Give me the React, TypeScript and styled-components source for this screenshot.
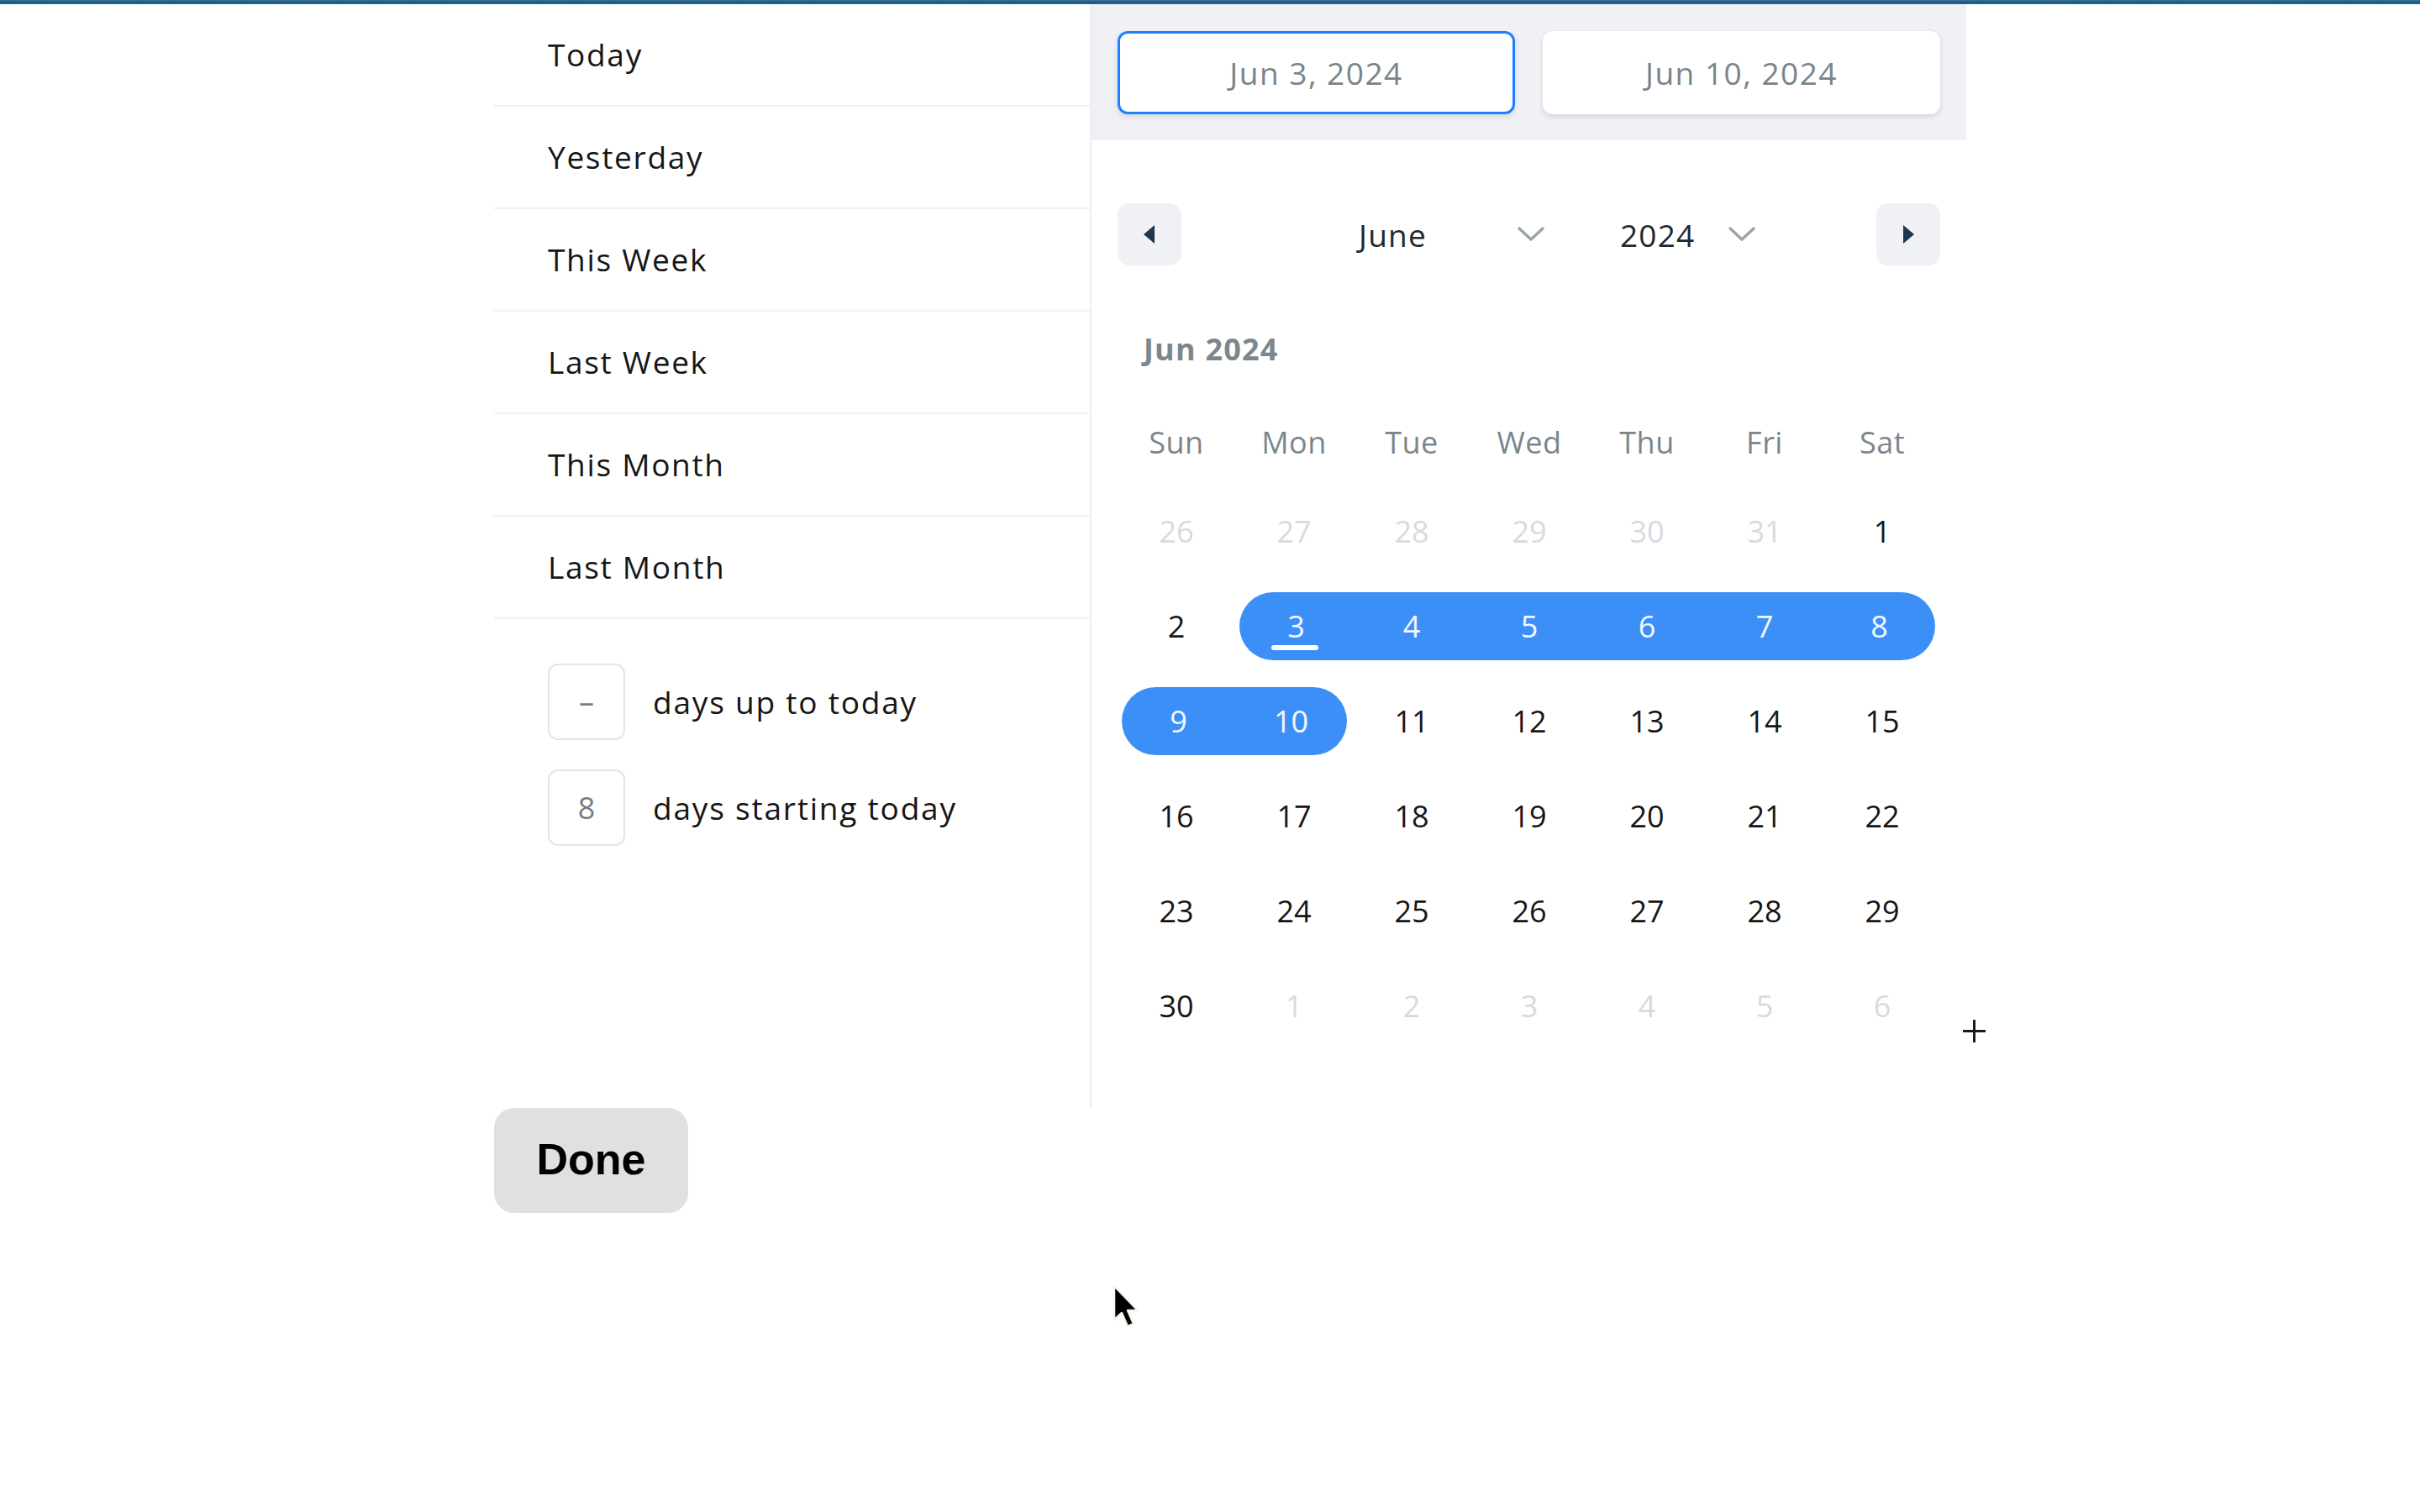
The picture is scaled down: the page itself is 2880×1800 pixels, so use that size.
import React from "react";
import styled, { createGlobalStyle, css } from "styled-components";

const GlobalStyle = createGlobalStyle`
  html, body { margin: 0; padding: 0; background: #ffffff; }
  body { font-family: "Open Sans", "Noto Sans", sans-serif; color: #151515; }
  * { box-sizing: border-box; }
`;

const Page = styled.div`
  position: relative;
  width: 2880px;
  min-height: 1800px;
  background: #fff;
`;

const TopBar = styled.div`
  height: 5px;
  background: linear-gradient(to bottom, #3b7ea3 0%, #1c5478 50%, #2c6b90 100%);
`;

const Main = styled.div`
  display: flex;
  padding-left: 588px;
`;

const LeftPanel = styled.div`
  width: 709px;
  display: flex;
  flex-direction: column;
`;

const PresetRow = styled.div`
  height: 122px;
  border-bottom: 2px solid #eef0f3;
  display: flex;
  align-items: center;
  padding-left: 64px;
  padding-bottom: 2px;
  font-size: 37px;
  letter-spacing: 1.7px;
  color: #161616;
`;

const CountList = styled.div`
  display: flex;
  flex-direction: column;
  gap: 35px;
  padding: 53px 0 0 64px;
`;

const CountRow = styled.div`
  display: flex;
  align-items: center;
  gap: 33px;
`;

const CountBox = styled.div`
  width: 92px;
  height: 91px;
  border: 2px solid #dfe6e9;
  border-radius: 12px;
  display: flex;
  align-items: center;
  justify-content: center;
  font-size: 36px;
  color: #747e83;
`;

const CountLabel = styled.span`
  font-size: 37px;
  letter-spacing: 1.8px;
  color: #151515;
`;

const RightPanel = styled.div`
  width: 1043px;
  height: 1314px;
  border-left: 2px solid #eceef2;
  display: flex;
  flex-direction: column;
`;

const RangeHeader = styled.div`
  background: #eff1f5;
  padding: 32px 31px 31px 31px;
  display: flex;
  gap: 33px;
`;

const DateInput = styled.div<{ $active?: boolean }>`
  width: 474px;
  height: 99px;
  background: #fff;
  border-radius: 12px;
  display: flex;
  align-items: center;
  justify-content: center;
  font-size: 37px;
  letter-spacing: 1.5px;
  color: #79848a;
  box-shadow: 0 3px 6px rgba(40, 50, 70, 0.14);
  border: 3px solid ${(p) => (p.$active ? "#1f80ff" : "#ffffff")};
`;

const CalendarBody = styled.div`
  padding: 75px 31px 0 31px;
  display: flex;
  flex-direction: column;
`;

const NavRow = styled.div`
  display: flex;
  align-items: center;
  height: 74px;
`;

const NavButton = styled.div`
  width: 76px;
  height: 74px;
  border-radius: 14px;
  background: #f0f1f5;
  display: flex;
  align-items: center;
  justify-content: center;
`;

const Selects = styled.div`
  flex: 1;
  display: flex;
  align-items: center;
  padding-left: 211px;
`;

const SelectBox = styled.div<{ $w: number }>`
  width: ${(p) => p.$w}px;
  display: flex;
  align-items: center;
  justify-content: space-between;
  font-size: 37px;
  letter-spacing: 1.2px;
  color: #22292f;
`;

const MonthHeading = styled.div`
  margin-top: 73px;
  padding-left: 31px;
  height: 54px;
  line-height: 54px;
  font-size: 36px;
  font-weight: 700;
  letter-spacing: 1.2px;
  color: #7c878d;
`;

const Grid = styled.div`
  margin-top: 33px;
  display: grid;
  grid-template-columns: repeat(7, 140px);
`;

const WeekDay = styled.div`
  height: 100px;
  display: flex;
  align-items: center;
  justify-content: center;
  font-size: 36px;
  letter-spacing: 0.5px;
  color: #7a868c;
`;

const DayCell = styled.div`
  height: 113px;
  display: flex;
  align-items: center;
`;

const Band = styled.div<{ $inRange: boolean; $start: boolean; $end: boolean; $muted: boolean }>`
  position: relative;
  flex: 1;
  height: 81px;
  display: flex;
  align-items: center;
  justify-content: center;
  font-size: 36px;
  color: ${(p) => (p.$muted ? "#d6dbe0" : "#161616")};
  ${(p) =>
    p.$inRange &&
    css`
      background: #3d8ff8;
      color: #f4f8ff;
    `}
  ${(p) =>
    p.$start &&
    css`
      margin-left: 5px;
      border-top-left-radius: 41px;
      border-bottom-left-radius: 41px;
    `}
  ${(p) =>
    p.$end &&
    css`
      margin-right: 7px;
      border-top-right-radius: 41px;
      border-bottom-right-radius: 41px;
    `}
`;

const TodayMark = styled.span`
  position: absolute;
  left: 50%;
  bottom: 12px;
  width: 56px;
  height: 6px;
  margin-left: -30px;
  border-radius: 3px;
  background: #ffffff;
`;

const Footer = styled.div`
  padding-left: 588px;
`;

const DoneButton = styled.button`
  width: 231px;
  height: 125px;
  border: none;
  border-radius: 24px;
  background: #e0e0e0;
  font-family: "Liberation Sans", Arial, sans-serif;
  font-weight: 700;
  font-size: 52px;
  color: #000;
  padding: 0 0 4px 0;
`;

const Crosshair = styled.div`
  position: absolute;
  left: 2336px;
  top: 1214px;
  width: 27px;
  height: 27px;
  &::before,
  &::after {
    content: "";
    position: absolute;
    background: #1a1a1a;
  }
  &::before {
    left: 12px;
    top: 0;
    width: 3px;
    height: 27px;
  }
  &::after {
    top: 12px;
    left: 0;
    height: 3px;
    width: 27px;
  }
`;

const Pointer = styled.svg`
  position: absolute;
  left: 1322px;
  top: 1528px;
`;

const ChevronDown = () => (
  <svg width="34" height="20" viewBox="0 0 34 20">
    <path d="M3 3 L17 16 L31 3" fill="none" stroke="#9ba4a9" strokeWidth="3.5" strokeLinecap="round" strokeLinejoin="round" />
  </svg>
);

const presets = ["Today", "Yesterday", "This Week", "Last Week", "This Month", "Last Month"];
const weekdays = ["Sun", "Mon", "Tue", "Wed", "Thu", "Fri", "Sat"];

type Day = { n: number; muted?: boolean; inRange?: boolean; start?: boolean; end?: boolean; today?: boolean };

const buildDays = (): Day[] => {
  const days: Day[] = [];
  [26, 27, 28, 29, 30, 31].forEach((n) => days.push({ n, muted: true }));
  for (let n = 1; n <= 30; n++) {
    const inRange = n >= 3 && n <= 10;
    days.push({
      n,
      inRange,
      start: n === 3 || n === 9,
      end: n === 8 || n === 10,
      today: n === 3,
    });
  }
  [1, 2, 3, 4, 5, 6].forEach((n) => days.push({ n, muted: true }));
  return days;
};

export default function App() {
  const days = buildDays();
  return (
    <Page>
      <GlobalStyle />
      <TopBar />
      <Main>
        <LeftPanel>
          {presets.map((p) => (
            <PresetRow key={p}>{p}</PresetRow>
          ))}
          <CountList>
            <CountRow>
              <CountBox>–</CountBox>
              <CountLabel>days up to today</CountLabel>
            </CountRow>
            <CountRow>
              <CountBox>8</CountBox>
              <CountLabel>days starting today</CountLabel>
            </CountRow>
          </CountList>
        </LeftPanel>
        <RightPanel>
          <RangeHeader>
            <DateInput $active>Jun 3, 2024</DateInput>
            <DateInput>Jun 10, 2024</DateInput>
          </RangeHeader>
          <CalendarBody>
            <NavRow>
              <NavButton>
                <svg width="20" height="26" viewBox="0 0 20 26">
                  <path d="M16 2 L3 13 L16 24 Z" fill="#1f3550" />
                </svg>
              </NavButton>
              <Selects>
                <SelectBox $w={222}>
                  <span>June</span>
                  <ChevronDown />
                </SelectBox>
                <SelectBox $w={162} style={{ marginLeft: 89 }}>
                  <span>2024</span>
                  <ChevronDown />
                </SelectBox>
              </Selects>
              <NavButton>
                <svg width="20" height="26" viewBox="0 0 20 26">
                  <path d="M4 2 L17 13 L4 24 Z" fill="#1f3550" />
                </svg>
              </NavButton>
            </NavRow>
            <MonthHeading>Jun 2024</MonthHeading>
            <Grid>
              {weekdays.map((w) => (
                <WeekDay key={w}>{w}</WeekDay>
              ))}
              {days.map((d, i) => (
                <DayCell key={i}>
                  <Band $inRange={!!d.inRange} $start={!!d.start} $end={!!d.end} $muted={!!d.muted}>
                    {d.n}
                    {d.today && <TodayMark />}
                  </Band>
                </DayCell>
              ))}
            </Grid>
          </CalendarBody>
        </RightPanel>
      </Main>
      <Footer>
        <DoneButton>Done</DoneButton>
      </Footer>
      <Crosshair />
      <Pointer width="34" height="54" viewBox="0 0 34 54">
        <path d="M4 3 L4 43 L13 35 L20 51 L27 48 L20 32 L32 32 Z" fill="#000" stroke="#eef7e8" strokeWidth="2.5" strokeLinejoin="round" />
      </Pointer>
    </Page>
  );
}
